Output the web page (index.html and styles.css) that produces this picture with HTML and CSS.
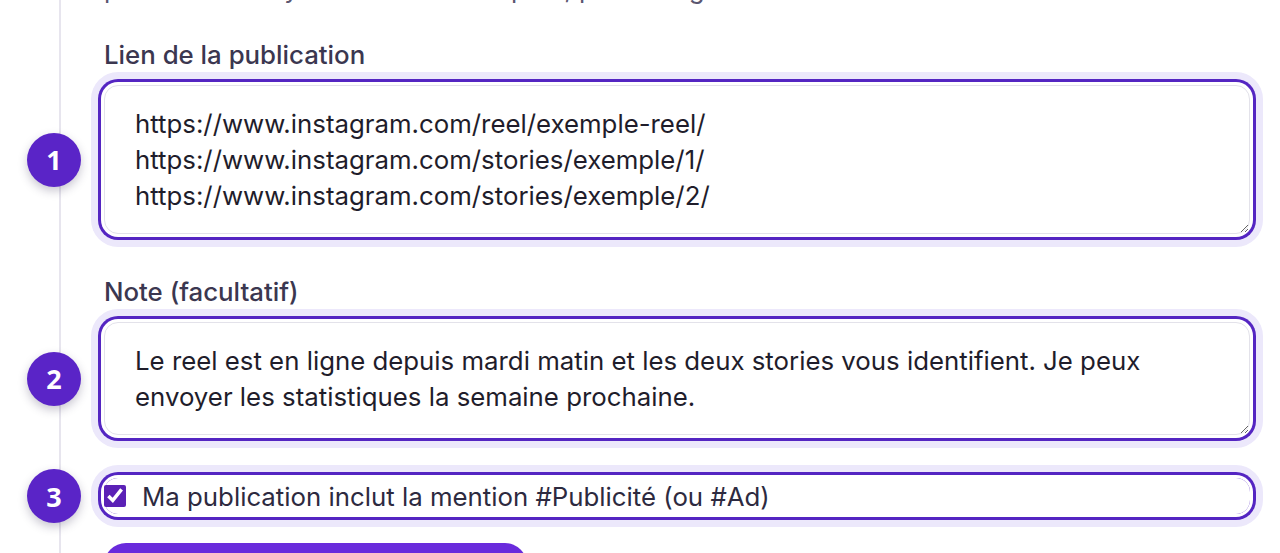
FILE: index.html
```html
<!DOCTYPE html>
<html lang="fr">
<head>
<meta charset="utf-8">
<title>Publication</title>
<link rel="stylesheet" href="styles.css">
</head>
<body>
<div class="rail">
  <div class="content">
    <p class="intro">plus tard. Envoyez bien le lien du post, puis le tag.</p>

    <div class="field">
      <label class="label" for="lien">Lien de la publication</label>
      <div class="hl-wrap">
        <span class="badge">1</span>
        <textarea id="lien" class="input hl" rows="3">https://www.instagram.com/reel/exemple-reel/
https://www.instagram.com/stories/exemple/1/
https://www.instagram.com/stories/exemple/2/</textarea>
      </div>
    </div>

    <div class="field">
      <label class="label" for="note">Note (facultatif)</label>
      <div class="hl-wrap">
        <span class="badge">2</span>
        <textarea id="note" class="input hl" rows="2">Le reel est en ligne depuis mardi matin et les deux stories vous identifient. Je peux envoyer les statistiques la semaine prochaine.</textarea>
      </div>
    </div>

    <div class="field">
      <div class="hl-wrap">
        <span class="badge">3</span>
        <label class="check hl">
          <input type="checkbox" checked>
          <span>Ma publication inclut la mention #Publicité (ou #Ad)</span>
        </label>
      </div>
    </div>

    <button class="submit" type="button">Envoyer la publication</button>
  </div>
</div>
</body>
</html>
```

FILE: styles.css
```css
html, body {
  margin: 0;
  padding: 0;
  background: #ffffff;
}

body {
  font-family: Inter, "Noto Sans", "Liberation Sans", sans-serif;
  color: #1f1d2b;
  overflow: hidden;
  height: 553px;
}

.rail {
  margin-left: 59px;
  border-left: 2px solid #e7e5ee;
  padding-left: 43px;
  padding-right: 30px;
  min-height: 600px;
}

.content {
  display: flex;
  flex-direction: column;
}

.intro {
  margin: -26px 0 36px;
  font-size: 25.8px;
  line-height: 30px;
  color: #5b5670;
  white-space: nowrap;
}

.field {
  display: flex;
  flex-direction: column;
  gap: 15px;
  margin-bottom: 43px;
}

.label {
  font-size: 25.8px;
  line-height: 30px;
  font-weight: 500;
  color: #3b3750;
}

.hl-wrap {
  position: relative;
}

.hl {
  box-shadow: 0 0 0 3px #ffffff, 0 0 0 6px #5425c2, 0 0 0 13px #ece8fb;
}

.input {
  display: block;
  box-sizing: border-box;
  width: 100%;
  margin: 0;
  padding: 20px 30px 19px;
  border: 1px solid #e3e2ea;
  border-radius: 14px;
  font-family: Inter, "Noto Sans", "Liberation Sans", sans-serif;
  font-size: 25.8px;
  line-height: 36px;
  color: #1f1d2b;
  background: #ffffff;
  resize: vertical;
  outline: none;
}

.badge {
  position: absolute;
  left: -77px;
  top: 50%;
  transform: translateY(-50%);
  width: 54px;
  height: 54px;
  border-radius: 50%;
  background: #5a24c7;
  color: #ffffff;
  font-family: "Open Sans", "Noto Sans", sans-serif;
  font-weight: 700;
  font-size: 27px;
  display: flex;
  align-items: center;
  justify-content: center;
  box-shadow: 0 4px 10px rgba(40, 30, 70, 0.25);
}

.check {
  display: flex;
  align-items: center;
  gap: 16px;
  height: 36px;
  border-radius: 14px;
  font-size: 25.8px;
  color: #2d2a40;
}

.check input {
  width: 22px;
  height: 22px;
  margin: 0;
  accent-color: #5b21b6;
}

.submit {
  align-self: flex-start;
  margin-top: -14px;
  width: 423px;
  height: 54px;
  border: none;
  border-radius: 22px;
  background: #6a2bdc;
  color: #ffffff;
  font-family: Inter, "Noto Sans", sans-serif;
  font-size: 24px;
  font-weight: 600;
}
```
